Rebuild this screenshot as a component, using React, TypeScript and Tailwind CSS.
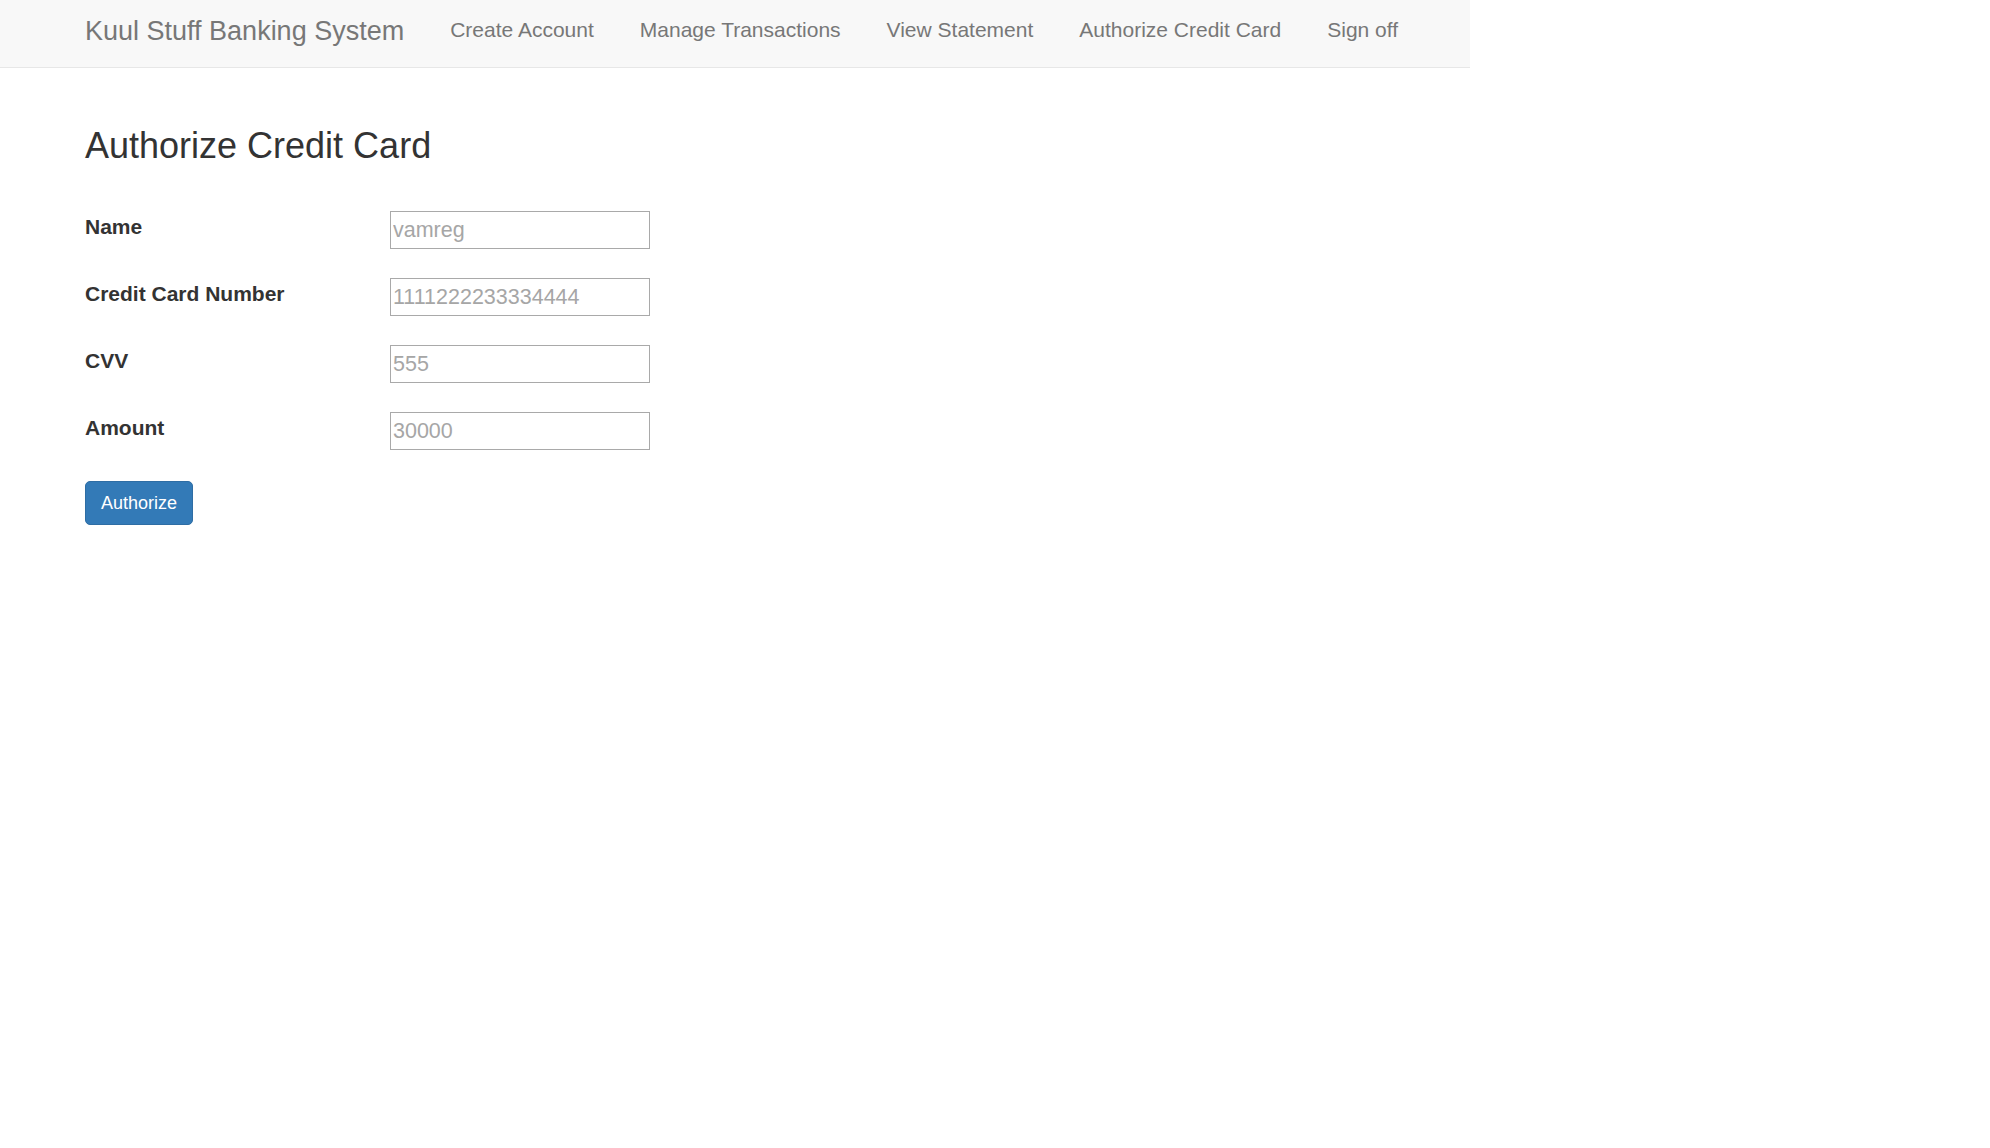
const fields = [
  { label: 'Name', value: 'vamreg' },
  { label: 'Credit Card Number', value: '1111222233334444' },
  { label: 'CVV', value: '555' },
  { label: 'Amount', value: '30000' },
]

const links = ['Create Account', 'Manage Transactions', 'View Statement', 'Authorize Credit Card', 'Sign off']

const App = () => {
  return (
    <div className="min-h-screen bg-white font-['Liberation_Sans',Arial,sans-serif] text-[#333]">
      <nav className="flex h-[68px] w-[1470px] items-center border-b border-[#e7e7e7] bg-[#f8f8f8] pb-[4px] pl-[85px]">
        <a className="mr-[23px] text-[27px] leading-none text-[#777]">Kuul Stuff Banking System</a>
        <ul className="flex">
          {links.map((link) => (
            <li key={link}>
              <a className="px-[23px] text-[21px] leading-none text-[#777]">{link}</a>
            </li>
          ))}
        </ul>
      </nav>
      <main className="pl-[85px] pt-[58px]">
        <h3 className="text-[36px] leading-[40px] text-[#333]">Authorize Credit Card</h3>
        <form className="mt-[45px] flex flex-col gap-[29px]">
          {fields.map(({ label, value }) => (
            <div key={label} className="flex items-start">
              <label className="w-[305px] text-[21px] font-bold leading-[31px]">{label}</label>
              <input
                className="h-[38px] w-[260px] border border-[#a9a9a9] px-[2px] text-[21.5px] text-[#a6a6a6] outline-none"
                defaultValue={value}
                readOnly
              />
            </div>
          ))}
          <div>
            <button
              type="button"
              className="mt-[2px] h-[44px] rounded-[5px] border border-[#2e6da4] bg-[#337ab7] px-[15px] text-[18px] text-white"
            >
              Authorize
            </button>
          </div>
        </form>
      </main>
    </div>
  )
}

export default App
